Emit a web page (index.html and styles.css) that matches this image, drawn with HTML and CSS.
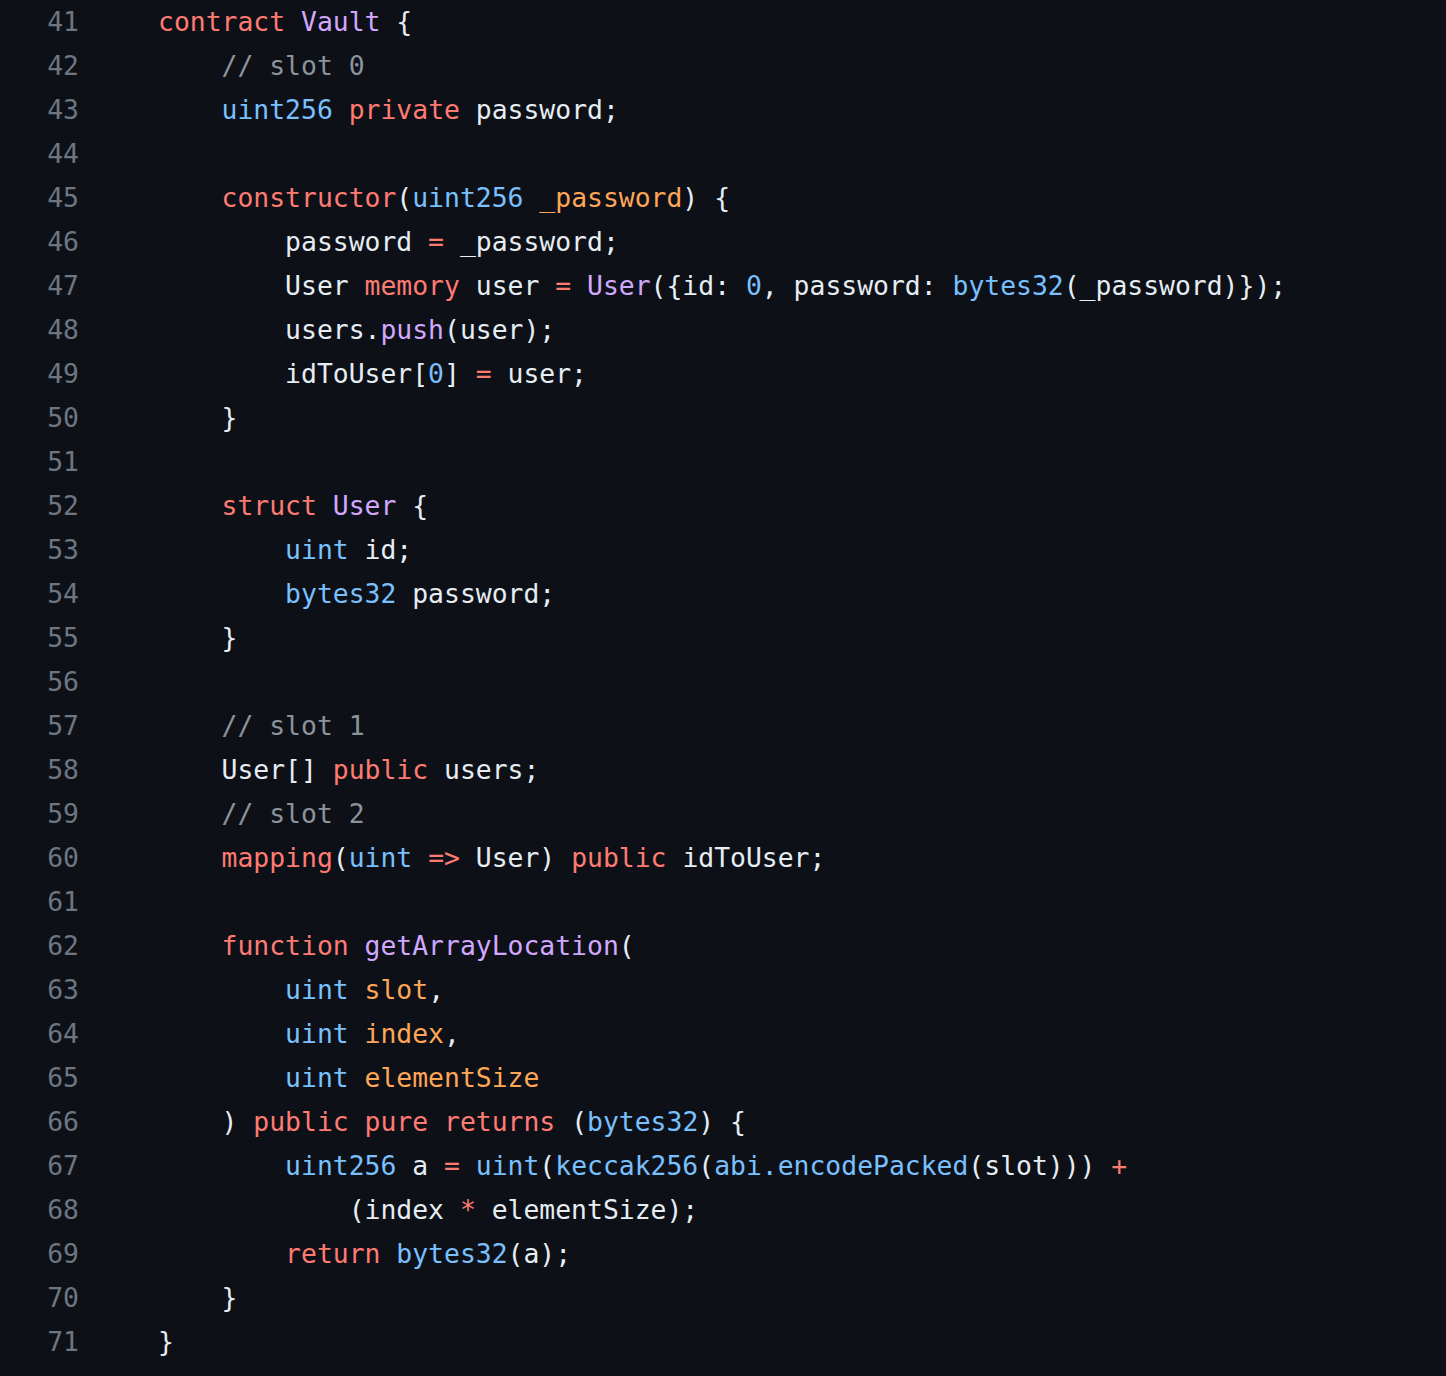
FILE: index.html
```html
<!DOCTYPE html>
<html>
<head>
<meta charset="utf-8">
<link rel="stylesheet" href="styles.css">
</head>
<body>
<div class="code">
<div class="row"><span class="ln">41</span><span class="lc"><span class="k">contract</span> <span class="e">Vault</span> {</span></div>
<div class="row"><span class="ln">42</span><span class="lc">    <span class="c">// slot 0</span></span></div>
<div class="row"><span class="ln">43</span><span class="lc">    <span class="t">uint256</span> <span class="k">private</span> password;</span></div>
<div class="row"><span class="ln">44</span><span class="lc"></span></div>
<div class="row"><span class="ln">45</span><span class="lc">    <span class="k">constructor</span>(<span class="t">uint256</span> <span class="v">_password</span>) {</span></div>
<div class="row"><span class="ln">46</span><span class="lc">        password <span class="k">=</span> _password;</span></div>
<div class="row"><span class="ln">47</span><span class="lc">        User <span class="k">memory</span> user <span class="k">=</span> <span class="e">User</span>({id: <span class="t">0</span>, password: <span class="t">bytes32</span>(_password)});</span></div>
<div class="row"><span class="ln">48</span><span class="lc">        users.<span class="e">push</span>(user);</span></div>
<div class="row"><span class="ln">49</span><span class="lc">        idToUser[<span class="t">0</span>] <span class="k">=</span> user;</span></div>
<div class="row"><span class="ln">50</span><span class="lc">    }</span></div>
<div class="row"><span class="ln">51</span><span class="lc"></span></div>
<div class="row"><span class="ln">52</span><span class="lc">    <span class="k">struct</span> <span class="e">User</span> {</span></div>
<div class="row"><span class="ln">53</span><span class="lc">        <span class="t">uint</span> id;</span></div>
<div class="row"><span class="ln">54</span><span class="lc">        <span class="t">bytes32</span> password;</span></div>
<div class="row"><span class="ln">55</span><span class="lc">    }</span></div>
<div class="row"><span class="ln">56</span><span class="lc"></span></div>
<div class="row"><span class="ln">57</span><span class="lc">    <span class="c">// slot 1</span></span></div>
<div class="row"><span class="ln">58</span><span class="lc">    User[] <span class="k">public</span> users;</span></div>
<div class="row"><span class="ln">59</span><span class="lc">    <span class="c">// slot 2</span></span></div>
<div class="row"><span class="ln">60</span><span class="lc">    <span class="k">mapping</span>(<span class="t">uint</span> <span class="k">=&gt;</span> User) <span class="k">public</span> idToUser;</span></div>
<div class="row"><span class="ln">61</span><span class="lc"></span></div>
<div class="row"><span class="ln">62</span><span class="lc">    <span class="k">function</span> <span class="e">getArrayLocation</span>(</span></div>
<div class="row"><span class="ln">63</span><span class="lc">        <span class="t">uint</span> <span class="v">slot</span>,</span></div>
<div class="row"><span class="ln">64</span><span class="lc">        <span class="t">uint</span> <span class="v">index</span>,</span></div>
<div class="row"><span class="ln">65</span><span class="lc">        <span class="t">uint</span> <span class="v">elementSize</span></span></div>
<div class="row"><span class="ln">66</span><span class="lc">    ) <span class="k">public</span> <span class="k">pure</span> <span class="k">returns</span> (<span class="t">bytes32</span>) {</span></div>
<div class="row"><span class="ln">67</span><span class="lc">        <span class="t">uint256</span> a <span class="k">=</span> <span class="t">uint</span>(<span class="t">keccak256</span>(<span class="t">abi.encodePacked</span>(slot))) <span class="k">+</span></span></div>
<div class="row"><span class="ln">68</span><span class="lc">            (index <span class="k">*</span> elementSize);</span></div>
<div class="row"><span class="ln">69</span><span class="lc">        <span class="k">return</span> <span class="t">bytes32</span>(a);</span></div>
<div class="row"><span class="ln">70</span><span class="lc">    }</span></div>
<div class="row"><span class="ln">71</span><span class="lc">}</span></div>
</div>
</body>
</html>
```
FILE: styles.css
```css
html, body {
  margin: 0;
  padding: 0;
  background: #0d1117;
}
body {
  width: 1446px;
  height: 1376px;
  overflow: hidden;
}
.code {
  font-family: "DejaVu Sans Mono", "Liberation Mono", monospace;
  font-size: 26.4px;
  line-height: 44px;
  color: #e6edf3;
}
.row {
  display: flex;
  height: 44px;
}
.ln {
  width: 79px;
  text-align: right;
  color: #6e7681;
  flex: none;
}
.lc {
  white-space: pre;
  padding-left: 79px;
}
.k { color: #ff7b72; }
.e { color: #d2a8ff; }
.t { color: #79c0ff; }
.c { color: #8b949e; }
.v { color: #ffa657; }
```
